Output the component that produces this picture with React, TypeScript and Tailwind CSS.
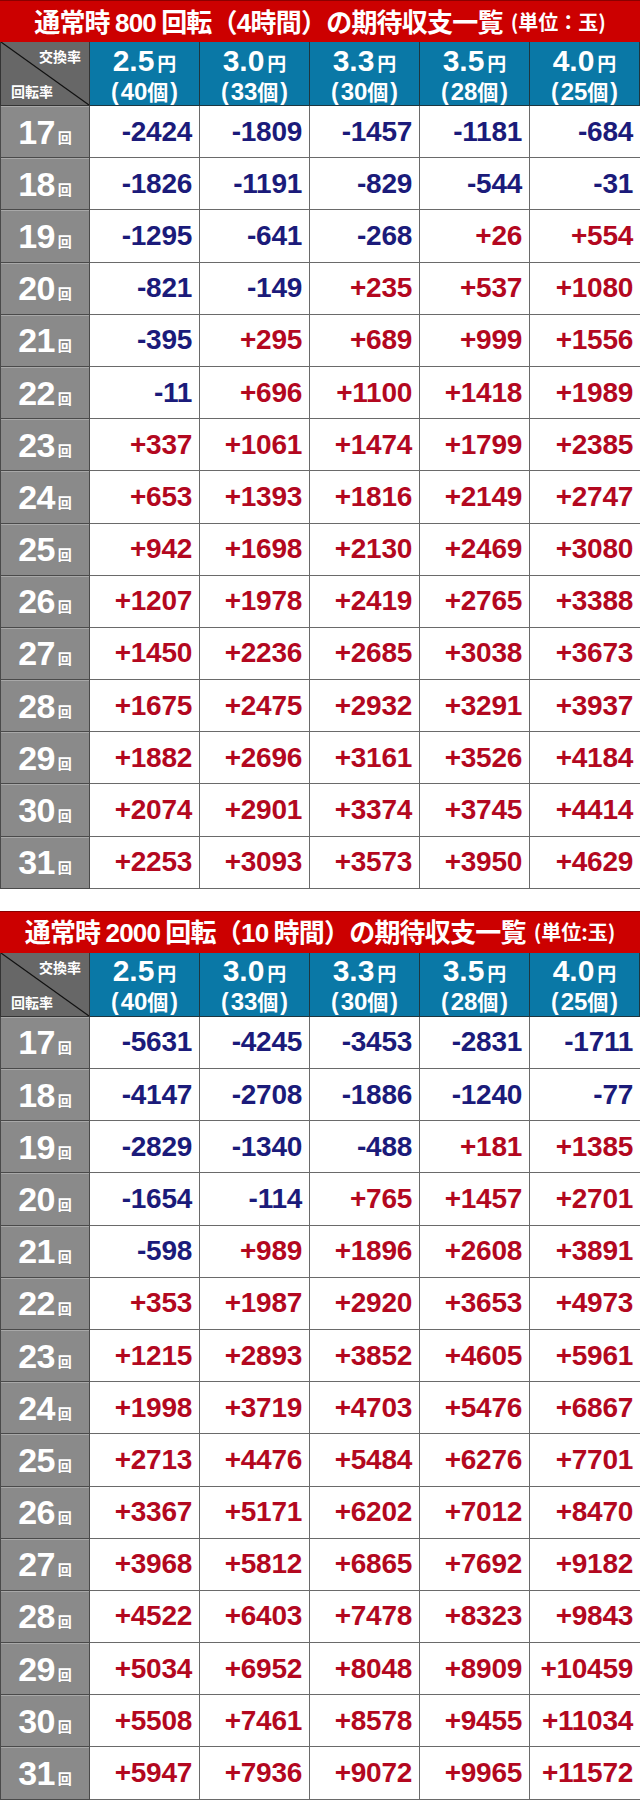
import React from "react";

const RATES = [
  { rate: "2.5", balls: "40" },
  { rate: "3.0", balls: "33" },
  { rate: "3.3", balls: "30" },
  { rate: "3.5", balls: "28" },
  { rate: "4.0", balls: "25" },
];

const TABLE_800: number[][] = [
  [-2424, -1809, -1457, -1181, -684],
  [-1826, -1191, -829, -544, -31],
  [-1295, -641, -268, 26, 554],
  [-821, -149, 235, 537, 1080],
  [-395, 295, 689, 999, 1556],
  [-11, 696, 1100, 1418, 1989],
  [337, 1061, 1474, 1799, 2385],
  [653, 1393, 1816, 2149, 2747],
  [942, 1698, 2130, 2469, 3080],
  [1207, 1978, 2419, 2765, 3388],
  [1450, 2236, 2685, 3038, 3673],
  [1675, 2475, 2932, 3291, 3937],
  [1882, 2696, 3161, 3526, 4184],
  [2074, 2901, 3374, 3745, 4414],
  [2253, 3093, 3573, 3950, 4629],
];

const TABLE_2000: number[][] = [
  [-5631, -4245, -3453, -2831, -1711],
  [-4147, -2708, -1886, -1240, -77],
  [-2829, -1340, -488, 181, 1385],
  [-1654, -114, 765, 1457, 2701],
  [-598, 989, 1896, 2608, 3891],
  [353, 1987, 2920, 3653, 4973],
  [1215, 2893, 3852, 4605, 5961],
  [1998, 3719, 4703, 5476, 6867],
  [2713, 4476, 5484, 6276, 7701],
  [3367, 5171, 6202, 7012, 8470],
  [3968, 5812, 6865, 7692, 9182],
  [4522, 6403, 7478, 8323, 9843],
  [5034, 6952, 8048, 8909, 10459],
  [5508, 7461, 8578, 9455, 11034],
  [5947, 7936, 9072, 9965, 11572],
];

const jp = "font-['Noto_Sans_CJK_JP',sans-serif]";
const num = "font-['Liberation_Sans','Noto_Sans_CJK_JP',sans-serif]";

function Title({ main, unit }: { main: React.ReactNode; unit: string }) {
  return (
    <div
      className={`flex h-[42px] items-center justify-center border-t border-[#8a0000] bg-[#cc0000] text-white ${jp}`}
    >
      <span className="text-[26px] font-bold leading-none tracking-[-0.03em]">{main}</span>
      <span className="ml-2 text-[20px] font-bold leading-none">{unit}</span>
    </div>
  );
}

function HeaderRow() {
  return (
    <div className="grid h-[64px] grid-cols-[90px_repeat(5,110px)]">
      <div className="relative border-b border-l border-r border-[#333] bg-[#676767] text-white">
        <svg
          className="absolute inset-0 h-full w-full"
          viewBox="0 0 100 100"
          preserveAspectRatio="none"
        >
          <line x1="0" y1="0" x2="100" y2="100" stroke="#111" strokeWidth="1.2" vectorEffect="non-scaling-stroke" />
        </svg>
        <span className={`absolute right-[8px] top-[4px] text-[14px] font-bold ${jp}`}>交換率</span>
        <span className={`absolute bottom-[3px] left-[10px] text-[14px] font-bold ${jp}`}>回転率</span>
      </div>
      {RATES.map((r) => (
        <div
          key={r.rate}
          className="flex flex-col items-center justify-center border-b border-r border-[#1d3640] bg-[#0a78a6] pt-[2px] text-white"
        >
          <div className="flex items-baseline leading-none">
            <span className={`text-[30px] font-bold ${num}`}>{r.rate}</span>
            <span className={`ml-[3px] text-[19px] font-bold ${jp}`}>円</span>
          </div>
          <div className="mt-[4px] flex items-baseline font-bold leading-none">
            <span className={`text-[23px] ${num}`}>(</span>
            <span className={`ml-[2px] text-[24px] ${num}`}>{r.balls}</span>
            <span className={`text-[21px] ${jp}`}>個</span>
            <span className={`ml-[2px] text-[23px] ${num}`}>)</span>
          </div>
        </div>
      ))}
    </div>
  );
}

function DataRow({ spins, values }: { spins: number; values: number[] }) {
  return (
    <div className="grid h-[52.2px] grid-cols-[90px_repeat(5,110px)]">
      <div className="flex items-center justify-center border-b border-l border-r border-[#4a4a4a] bg-[#8a8a8a] text-white shadow-[inset_0_1px_0_#a8a8a8]">
        <span className={`text-[34px] font-bold leading-none tracking-[-0.02em] ${num}`}>{spins}</span>
        <span className={`ml-[3px] mt-[10px] text-[14px] font-bold leading-none ${jp}`}>回</span>
      </div>
      {values.map((v, i) => (
        <div
          key={i}
          className={`flex items-center justify-end border-b border-[#6a6a6a] bg-white pr-[7px] ${
            i < 4 ? "border-r" : ""
          }`}
        >
          <span
            className={`text-[28px] font-bold leading-none tracking-[-0.01em] ${num} ${
              v < 0 ? "text-[#1b1b7a]" : "text-[#b3081f]"
            }`}
          >
            {v < 0 ? `-${Math.abs(v)}` : `+${v}`}
          </span>
        </div>
      ))}
    </div>
  );
}

function ExpectTable({
  title,
  unit,
  rows,
}: {
  title: React.ReactNode;
  unit: string;
  rows: number[][];
}) {
  return (
    <section>
      <Title main={title} unit={unit} />
      <HeaderRow />
      {rows.map((vals, i) => (
        <DataRow key={i} spins={17 + i} values={vals} />
      ))}
    </section>
  );
}

export default function App() {
  return (
    <div className="h-[1814px] w-[640px] bg-white">
      <ExpectTable
        title={
          <>
            通常時 <span className={num}>800</span> 回転（<span className={num}>4</span>時間）の期待収支一覧
          </>
        }
        unit="(単位：玉)"
        rows={TABLE_800}
      />
      <div className="h-[22px]" />
      <ExpectTable
        title={
          <>
            通常時 <span className={num}>2000</span> 回転（<span className={num}>10</span> 時間）の期待収支一覧
          </>
        }
        unit="(単位:玉)"
        rows={TABLE_2000}
      />
    </div>
  );
}
